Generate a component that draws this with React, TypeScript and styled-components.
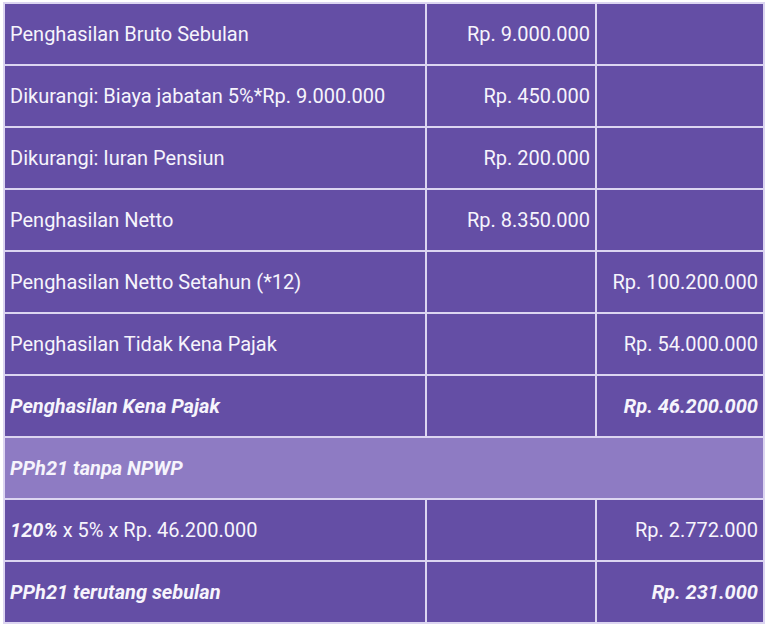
import { Fragment } from "react";
import styled, { createGlobalStyle } from "styled-components";

const GlobalStyle = createGlobalStyle`
  body {
    margin: 0;
    background: #ffffff;
    font-family: Roboto, "Liberation Sans", sans-serif;
  }
`;

const Table = styled.div`
  display: grid;
  grid-template-columns: 420px 168px 166px;
  grid-auto-rows: 60px;
  gap: 2px;
  padding: 2px;
  margin: 2px 3px 0;
  width: max-content;
  background: #dcd5f1;
`;

const Cell = styled.div<{ $align?: "left" | "right"; $strong?: boolean }>`
  display: flex;
  align-items: center;
  justify-content: ${(p) => (p.$align === "right" ? "flex-end" : "flex-start")};
  padding: 0 5px;
  background: #644ea5;
  color: #f6f4fc;
  font-size: 20px;
  font-weight: ${(p) => (p.$strong ? 700 : 400)};
  font-style: ${(p) => (p.$strong ? "italic" : "normal")};
  white-space: nowrap;
`;

const Band = styled(Cell)`
  grid-column: 1 / -1;
  background: #8e7bc3;
`;

const Emph = styled.b`
  font-style: italic;
  font-weight: 700;
`;

type Row = {
  label: React.ReactNode;
  mid?: string;
  right?: string;
  strong?: boolean;
  band?: boolean;
};

const rows: Row[] = [
  { label: "Penghasilan Bruto Sebulan", mid: "Rp. 9.000.000" },
  { label: "Dikurangi: Biaya jabatan 5%*Rp. 9.000.000", mid: "Rp. 450.000" },
  { label: "Dikurangi: Iuran Pensiun", mid: "Rp. 200.000" },
  { label: "Penghasilan Netto", mid: "Rp. 8.350.000" },
  { label: "Penghasilan Netto Setahun (*12)", right: "Rp. 100.200.000" },
  { label: "Penghasilan Tidak Kena Pajak", right: "Rp. 54.000.000" },
  { label: "Penghasilan Kena Pajak", right: "Rp. 46.200.000", strong: true },
  { label: "PPh21 tanpa NPWP", strong: true, band: true },
  {
    label: (
      <>
        <Emph>120%</Emph> x 5% x Rp. 46.200.000
      </>
    ),
    right: "Rp. 2.772.000",
  },
  { label: "PPh21 terutang sebulan", right: "Rp. 231.000", strong: true },
];

export default function App() {
  return (
    <>
      <GlobalStyle />
      <Table>
        {rows.map((r, i) =>
          r.band ? (
            <Band key={i} $strong={r.strong}>
              <span>{r.label}</span>
            </Band>
          ) : (
            <Fragment key={i}>
              <Cell $strong={r.strong}>
                <span>{r.label}</span>
              </Cell>
              <Cell $align="right" $strong={r.strong}>
                {r.mid}
              </Cell>
              <Cell $align="right" $strong={r.strong}>
                {r.right}
              </Cell>
            </Fragment>
          )
        )}
      </Table>
    </>
  );
}
